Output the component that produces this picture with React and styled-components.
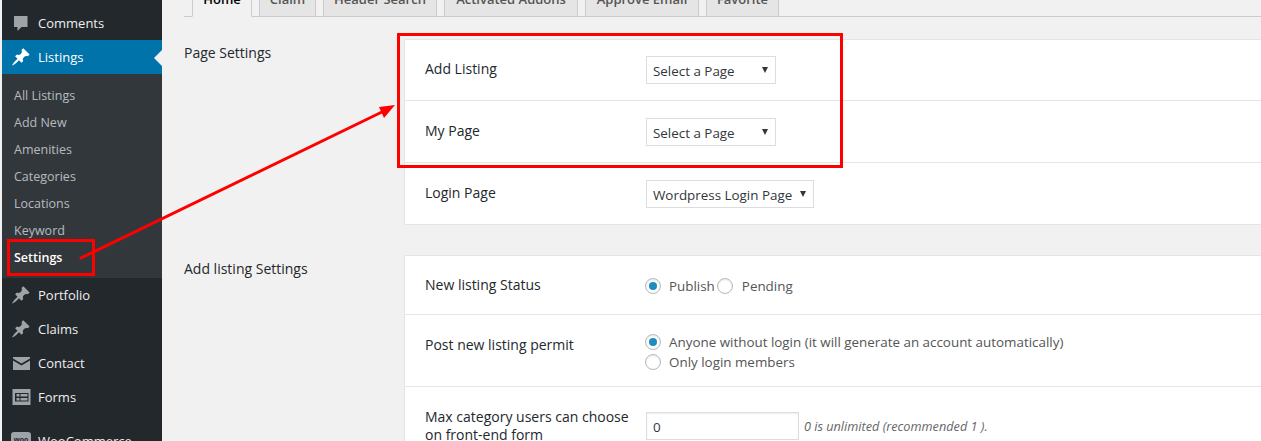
import React from "react";
import styled, { createGlobalStyle } from "styled-components";

const Global = createGlobalStyle`
  html, body { margin: 0; padding: 0; background: #f1f1f1; }
  body { font-family: "Open Sans", "Noto Sans", sans-serif; font-size: 13px; line-height: 18px; color: #23282d; }
`;

const Page = styled.div`
  position: relative; display: flex; width: 1261px; height: 441px; overflow: hidden; background: #f1f1f1;
`;
const Sidebar = styled.nav`
  flex: 0 0 160px; margin-left: 2px; background: #23282d; display: flex; flex-direction: column;
`;
const MenuItem = styled.div`
  position: relative; flex: none; display: flex; align-items: center; box-sizing: border-box;
  height: 34px; padding-left: 9px; gap: 7px; color: #eee; font-size: 13px;
  margin-top: ${p => p.$gap || 0}px;
  background: ${p => (p.$active ? "#0073aa" : "transparent")};
  color: ${p => (p.$active ? "#fff" : "#eee")};
  ${p => p.$first && "height: 40px; padding-top: 6px;"}
  svg { flex: none; width: 20px; height: 20px; fill: ${p => (p.$active ? "#fff" : "#9ea3a8")}; }
`;
const ActiveNotch = styled.span`
  position: absolute; right: 0; top: 10px; border: 8px solid transparent; border-right-color: #f1f1f1; border-left-width: 0;
`;
const SubMenu = styled.div`
  flex: none; background: #32373c; padding: 8px 0 7px; display: flex; flex-direction: column;
`;
const SubItem = styled.div`
  height: 27px; line-height: 27px; padding-left: 12px; font-size: 12.5px;
  color: ${p => (p.$current ? "#fff" : "rgba(240,245,250,.7)")};
  font-weight: ${p => (p.$current ? 600 : 400)};
`;
const Main = styled.main`
  flex: 0 0 auto; width: 1099px; padding-left: 22px; box-sizing: border-box; display: flex; flex-direction: column;
`;
const TabStrip = styled.div`
  flex: none; height: 17px; box-sizing: border-box; display: flex; align-items: flex-end; gap: 7px;
  border-bottom: 1px solid #ccc; padding-left: 8px; margin-bottom: 22px;
`;
const Tab = styled.div`
  flex: none; box-sizing: border-box; width: ${p => p.$w}px; height: ${p => (p.$active ? 33 : 32)}px; line-height: 28px;
  margin-bottom: ${p => (p.$active ? -1 : 0)}px; text-align: center; font-size: 13px; font-weight: 600;
  border: 1px solid #ccc; border-bottom: ${p => (p.$active ? "1px solid #f1f1f1" : "0")};
  background: ${p => (p.$active ? "#f1f1f1" : "#e5e5e5")};
  color: ${p => (p.$active ? "#000" : "#555")};
`;
const Section = styled.section`
  display: grid; grid-template-columns: 220px 1fr; margin-bottom: 30px;
`;
const SectionTitle = styled.h2`
  margin: 5px 0 0; font-size: 14px; line-height: 18px; font-weight: 400; color: #23282d;
`;
const Card = styled.div`
  background: #fff; border: 1px solid #e5e5e5; border-right: 0;
`;
const Row = styled.div`
  display: grid; grid-template-columns: 221px 1fr; align-items: start; box-sizing: border-box;
  padding: 17px 0 ${p => p.$pb ?? 16}px 20px; border-top: 1px solid #e5e5e5;
  min-height: ${p => p.$h || 0}px;
  &:first-child { border-top: 0; padding-top: 16px; }
`;
const Label = styled.div`
  margin-top: 4px; width: 210px; font-size: 14px; line-height: 18px; color: #23282d;
`;
const Select = styled.div`
  box-sizing: border-box; display: flex; align-items: center; justify-content: space-between;
  width: ${p => p.$w}px; height: 28px; padding: 2px 7px 0 6px; border: 1px solid #ddd; background: #fff;
  color: #32373c; font-size: 13.4px; white-space: nowrap;
`;
const Caret = styled.span`
  border-style: solid; border-width: 6px 3px 0; border-color: #32373c transparent transparent; margin-top: -2px;
`;
const RadioLine = styled.div`
  display: flex; align-items: center; height: 20px; margin-top: ${p => p.$top || 0}px; color: #555; font-size: 13.4px; white-space: nowrap;
`;
const Radio = styled.span`
  flex: none; box-sizing: border-box; width: 16px; height: 16px; border-radius: 50%; margin-right: ${p => p.$right ?? 8}px;
  border: 1px solid #b4b9be; background: #fff; display: flex; align-items: center; justify-content: center;
  margin-left: ${p => p.$left ?? -1}px;
  box-shadow: inset 0 1px 2px rgba(0,0,0,.1);
  &::before { content: ""; width: 8px; height: 8px; border-radius: 50%; background: ${p => (p.$on ? "#1e8cbe" : "transparent")}; }
`;
const InputRow = styled.div`
  display: flex; align-items: center; gap: 5px; margin-top: 8px;
`;
const NumberBox = styled.div`
  box-sizing: border-box; width: 153px; height: 28px; line-height: 28px; padding-left: 6px; border: 1px solid #ddd;
  background: #fff; color: #32373c; font-size: 13.4px; box-shadow: inset 0 1px 2px rgba(0,0,0,.07);
`;
const Hint = styled.em`
  color: #666; font-size: 12.7px;
`;
const Marks = styled.svg`
  position: absolute; left: 0; top: 0; width: 1261px; height: 441px; pointer-events: none;
`;
const WooIcon = styled.span`
  flex: none; width: 20px; height: 18px; border-radius: 3px; background: #9ea3a8; color: #23282d; font-size: 7px;
  line-height: 16px; text-align: center; font-weight: 700;
`;

const pin = "M10.44 3.02l1.82-1.82 6.36 6.35-1.83 1.82c-1.05-.68-2.48-.57-3.41.36l-.75.75c-.92.93-1.04 2.35-.35 3.41l-1.83 1.82-2.41-2.41-2.8 2.79c-.42.42-3.38 2.71-3.8 2.29s1.86-3.39 2.28-3.81l2.79-2.79L4.1 9.36l1.83-1.82c1.05.69 2.48.57 3.41-.36l.75-.75c.93-.92 1.04-2.35.35-3.41z";
const Pin = () => <svg viewBox="0 0 20 20"><path d={pin} /></svg>;
const Bubble = () => <svg viewBox="0 0 20 20"><path d="M3 3h13.5v11H10.5l-4 4v-4H3z" /></svg>;
const Mail = () => <svg viewBox="0 0 20 20"><path d="M2 4h17v1.5l-8.5 5L2 5.5zM2 7.5l8.5 5 8.5-5V17H2z" /></svg>;
const Forms = () => (
  <svg viewBox="0 0 20 20">
    <path fillRule="evenodd" d="M1.5 2h18v16h-18zM4 6v8.5h13.500V6zM5.500 7h3v2.500h-3zM9.500 7h7v2.500h-7zM5.500 11h3v2.500h-3zM9.500 11h7v2.500h-7z" />
  </svg>
);

export default function App() {
  return (
    <Page>
      <Global />
      <Sidebar>
        <MenuItem $first><Bubble />Comments</MenuItem>
        <MenuItem $active><Pin />Listings<ActiveNotch /></MenuItem>
        <SubMenu>
          {["All Listings", "Add New", "Amenities", "Categories", "Locations", "Keyword"].map(t => <SubItem key={t}>{t}</SubItem>)}
          <SubItem $current>Settings</SubItem>
        </SubMenu>
        <MenuItem><Pin />Portfolio</MenuItem>
        <MenuItem><Pin />Claims</MenuItem>
        <MenuItem><Mail />Contact</MenuItem>
        <MenuItem><Forms />Forms</MenuItem>
        <MenuItem $gap={10}><WooIcon>woo</WooIcon>WooCommerce</MenuItem>
      </Sidebar>
      <Main>
        <TabStrip>
          <Tab $active $w={60}>Home</Tab>
          <Tab $w={57}>Claim</Tab>
          <Tab $w={114}>Header Search</Tab>
          <Tab $w={134}>Activated Addons</Tab>
          <Tab $w={114}>Approve Email</Tab>
          <Tab $w={73}>Favorite</Tab>
        </TabStrip>
        <Section>
          <SectionTitle>Page Settings</SectionTitle>
          <Card>
            <Row><Label>Add Listing</Label><Select $w={130}>Select a Page<Caret /></Select></Row>
            <Row><Label>My Page</Label><Select $w={130}>Select a Page<Caret /></Select></Row>
            <Row><Label>Login Page</Label><Select $w={168}>Wordpress Login Page<Caret /></Select></Row>
          </Card>
        </Section>
        <Section>
          <SectionTitle>Add listing Settings</SectionTitle>
          <Card>
            <Row $h={58}>
              <Label>New listing Status</Label>
              <RadioLine $top={4}><Radio $on />Publish<Radio $left={2} $right={9} />Pending</RadioLine>
            </Row>
            <Row $pb={14}>
              <Label>Post new listing permit</Label>
              <div>
                <RadioLine><Radio $on />Anyone without login (it will generate an account automatically)</RadioLine>
                <RadioLine><Radio />Only login members</RadioLine>
              </div>
            </Row>
            <Row>
              <Label>Max category users can choose on front-end form</Label>
              <InputRow><NumberBox>0</NumberBox><Hint>0 is unlimited (recommended 1 ).</Hint></InputRow>
            </Row>
          </Card>
        </Section>
      </Main>
      <Marks viewBox="0 0 1261 441">
        <rect x="8.5" y="240.500" width="85" height="34" fill="none" stroke="#f00" strokeWidth="3" />
        <rect x="398.500" y="34.500" width="443" height="132" fill="none" stroke="#f00" strokeWidth="3" />
        <line x1="81" y1="258" x2="384" y2="111" stroke="#f00" strokeWidth="3" strokeLinecap="round" />
        <polygon points="395,105 379,107 384,118" fill="#f00" />
      </Marks>
    </Page>
  );
}
